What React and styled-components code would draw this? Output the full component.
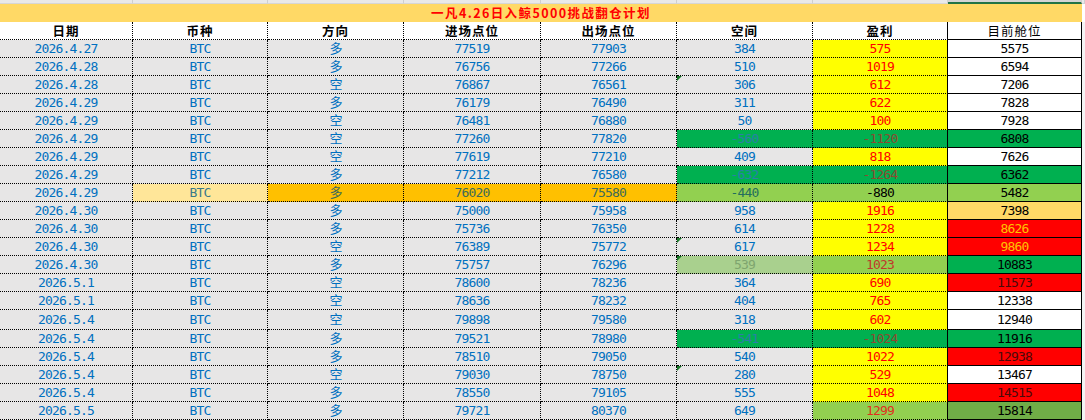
import React from 'react';
import styled, { createGlobalStyle } from 'styled-components';

const GlobalStyle = createGlobalStyle`
  body {
    margin: 0;
    background: #ffffff;
  }
`;

// column widths taken from the sheet (last 3px is the grey gutter at the right)
const COLS = '133px 135px 136px 137px 136px 136px 135px 134px 3px';

const Sheet = styled.div`
  width: 1085px;
  height: 420px;
  overflow: hidden;
  background: #ffffff;
`;

const HeadStrip = styled.div`
  display: grid;
  grid-template-columns: ${COLS};
  height: 4px;
`;

const StripCell = styled.div`
  background: ${(p) => (p.$active ? '#d4d4d4' : '#e9e9e9')};
  border-right: 1px solid #cfcfcf;
  border-bottom: ${(p) => (p.$active ? '2px solid #217346' : '1px solid #d6d6d6')};
  box-sizing: border-box;
`;

const TitleBar = styled.div`
  height: 18px;
  width: 1082px;
  background: #ffd966;
  display: flex;
  align-items: center;
  justify-content: center;
`;

const TitleText = styled.span`
  font-family: 'Noto Sans CJK SC', sans-serif;
  font-weight: 700;
  font-size: 12.5px;
  line-height: 18px;
  color: #ff0000;
  letter-spacing: 1.4px;
`;

const Row = styled.div`
  display: grid;
  grid-template-columns: ${COLS};
  height: ${(p) => p.$h || 18}px;
`;

const Cell = styled.div`
  position: relative;
  box-sizing: border-box;
  display: flex;
  align-items: center;
  justify-content: center;
  background: ${(p) => p.$bg || '#e7e6e6'};
  color: ${(p) => p.$color || '#0070c0'};
  border-right: 1px ${(p) => (p.$solidRight ? 'solid' : 'dotted')} #000;
  border-bottom: 1px ${(p) => (p.$solidBottom ? 'solid' : 'dotted')} #000;
  font-family: 'DejaVu Sans Mono', 'Noto Sans CJK SC', monospace;
  font-size: 13px;
  line-height: 15px;
  letter-spacing: -0.8px;
  white-space: nowrap;

  &::before {
    content: '';
    display: ${(p) => (p.$tri ? 'block' : 'none')};
    position: absolute;
    left: 0;
    top: 0;
    width: 0;
    height: 0;
    border-top: 5px solid #1b7a2a;
    border-right: 5px solid transparent;
  }
`;

const HeadCell = styled(Cell)`
  font-family: 'Noto Sans CJK SC', sans-serif;
  font-weight: ${(p) => (p.$plain ? 400 : 700)};
  font-size: 12.5px;
  line-height: 17px;
  letter-spacing: 1px;
  color: #000;
  background: #ffffff;
`;

const Gutter = styled.div`
  background: #f4f4f4;
`;

const GREEN = '#00b050';
const LIGHT_GREEN = '#92d050';
const RED = '#ff0000';
const YELLOW = '#ffff00';

const rows = [
  { d: '2026.4.27', dir: '多', a: 77519, b: 77903, s: 384, p: 575, pos: 5575 },
  { d: '2026.4.28', dir: '多', a: 76756, b: 77266, s: 510, p: 1019, pos: 6594 },
  { d: '2026.4.28', dir: '空', a: 76867, b: 76561, s: 306, p: 612, pos: 7206, tri: true },
  { d: '2026.4.29', dir: '多', a: 76179, b: 76490, s: 311, p: 622, pos: 7828 },
  { d: '2026.4.29', dir: '空', a: 76481, b: 76880, s: 50, p: 100, pos: 7928 },
  { d: '2026.4.29', dir: '空', a: 77260, b: 77820, s: -560, p: -1120, pos: 6808, loss: true },
  { d: '2026.4.29', dir: '空', a: 77619, b: 77210, s: 409, p: 818, pos: 7626 },
  { d: '2026.4.29', dir: '多', a: 77212, b: 76580, s: -632, p: -1264, pos: 6362, loss: true },
  { d: '2026.4.29', dir: '多', a: 76020, b: 75580, s: -440, p: -880, pos: 5482, marked: true },
  { d: '2026.4.30', dir: '多', a: 75000, b: 75958, s: 958, p: 1916, pos: 7398, posBg: '#ffd966' },
  { d: '2026.4.30', dir: '多', a: 75736, b: 76350, s: 614, p: 1228, pos: 8626, posBg: RED, posColor: '#ffc000' },
  { d: '2026.4.30', dir: '空', a: 76389, b: 75772, s: 617, p: 1234, pos: 9860, posBg: RED, posColor: '#ffc000', tri: true },
  {
    d: '2026.4.30', dir: '多', a: 75757, b: 76296, s: 539, p: 1023, pos: 10883, tri: true,
    sBg: '#a9d08e', sColor: '#7fa56e', pBg: LIGHT_GREEN, pColor: '#c0392b', posBg: GREEN,
  },
  { d: '2026.5.1', dir: '空', a: 78600, b: 78236, s: 364, p: 690, pos: 11573, posBg: RED, posColor: '#4a0a0a' },
  { d: '2026.5.1', dir: '空', a: 78636, b: 78232, s: 404, p: 765, pos: 12338 },
  { d: '2026.5.4', dir: '空', a: 79898, b: 79580, s: 318, p: 602, pos: 12940, h: 20 },
  { d: '2026.5.4', dir: '多', a: 79521, b: 78980, s: -541, p: -1024, pos: 11916, loss: true },
  { d: '2026.5.4', dir: '多', a: 78510, b: 79050, s: 540, p: 1022, pos: 12938, posBg: RED, posColor: '#4a0a0a' },
  { d: '2026.5.4', dir: '空', a: 79030, b: 78750, s: 280, p: 529, pos: 13467, tri: true },
  { d: '2026.5.4', dir: '多', a: 78550, b: 79105, s: 555, p: 1048, pos: 14515, posBg: RED, posColor: '#4a0a0a' },
  { d: '2026.5.5', dir: '多', a: 79721, b: 80370, s: 649, p: 1299, pos: 15814, pBg: LIGHT_GREEN, pColor: '#e0301e', posBg: '#70ad47' },
];

const headers = ['日期', '币种', '方向', '进场点位', '出场点位', '空间', '盈利'];

function cellLook(r) {
  if (r.loss) {
    return {
      sBg: GREEN, sColor: '#2b7fa8',
      pBg: GREEN, pColor: '#8c4a30',
      posBg: GREEN, posColor: '#000',
    };
  }
  if (r.marked) {
    return {
      coinBg: '#ffe699', coinColor: '#3c7a8a',
      midBg: '#ffc000', midColor: '#3d6b5a',
      sBg: LIGHT_GREEN, sColor: '#236e5e',
      pBg: LIGHT_GREEN, pColor: '#000',
      posBg: LIGHT_GREEN, posColor: '#000',
    };
  }
  return {
    sBg: r.sBg, sColor: r.sColor,
    pBg: r.pBg || YELLOW, pColor: r.pColor || RED,
    posBg: r.posBg || '#ffffff', posColor: r.posColor || '#000',
  };
}

export default function App() {
  return (
    <Sheet>
      <GlobalStyle />
      <HeadStrip>
        {Array.from({ length: 9 }).map((_, i) => (
          <StripCell key={i} $active={i === 7} />
        ))}
      </HeadStrip>

      <TitleBar>
        <TitleText>一凡4.26日入鲸5000挑战翻仓计划</TitleText>
      </TitleBar>

      <Row>
        {headers.map((h, i) => (
          <HeadCell key={h} $solidRight={i === 6}>{h}</HeadCell>
        ))}
        <HeadCell $plain $solidRight $solidBottom>目前舱位</HeadCell>
        <Gutter />
      </Row>

      {rows.map((r, i) => {
        const look = cellLook(r);
        return (
          <Row key={i} $h={r.h}>
            <Cell>{r.d}</Cell>
            <Cell $bg={look.coinBg} $color={look.coinColor}>BTC</Cell>
            <Cell $bg={look.midBg} $color={look.midColor}>{r.dir}</Cell>
            <Cell $bg={look.midBg} $color={look.midColor}>{r.a}</Cell>
            <Cell $bg={look.midBg} $color={look.midColor}>{r.b}</Cell>
            <Cell $bg={look.sBg} $color={look.sColor} $tri={r.tri}>{r.s}</Cell>
            <Cell $bg={look.pBg} $color={look.pColor} $solidRight>{r.p}</Cell>
            <Cell $bg={look.posBg} $color={look.posColor} $solidRight $solidBottom>{r.pos}</Cell>
            <Gutter />
          </Row>
        );
      })}
    </Sheet>
  );
}
